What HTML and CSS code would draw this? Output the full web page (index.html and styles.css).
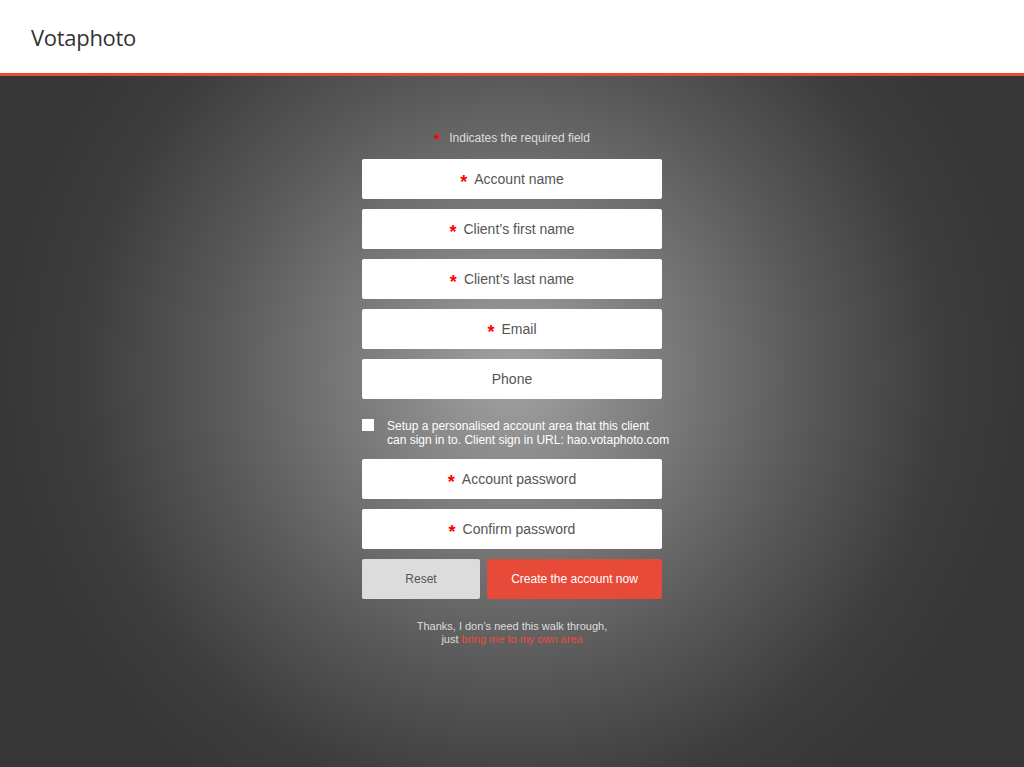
FILE: index.html
```html
<!DOCTYPE html>
<html lang="en">
<head>
  <meta charset="UTF-8">
  <title>Votaphoto</title>
  <meta name="viewport" content="width=device-width, initial-scale=1.0">
  <link rel="stylesheet" href="styles.css">
</head>
<body>

<header class="topbar">
  <div class="logo">Votaphoto</div>
</header>

<main class="stage">
  <form class="signup">
    <p class="legend"><span class="req">*</span> Indicates the required field</p>

    <div class="field"><span class="req">*</span> Account name</div>
    <div class="field"><span class="req">*</span> Client’s first name</div>
    <div class="field"><span class="req">*</span> Client’s last name</div>
    <div class="field"><span class="req">*</span> Email</div>
    <div class="field">Phone</div>

    <label class="check">
      <span class="box"></span>
      <span class="check-text">Setup a personalised account area that this client<br>can sign in to. Client sign in URL: hao.votaphoto.com</span>
    </label>

    <div class="field"><span class="req">*</span> Account password</div>
    <div class="field"><span class="req">*</span> Confirm password</div>

    <div class="actions">
      <button type="button" class="btn reset">Reset</button>
      <button type="button" class="btn create">Create the account now</button>
    </div>

    <p class="skip">Thanks, I don’s need this walk through,<br>just <a href="#">bring me to my own area</a></p>
  </form>
</main>

</body>
</html>
```

FILE: styles.css
```css
* {margin:0;padding:0;box-sizing:border-box}
html, body {height:100%;}
body {
  font-family: 'Liberation Sans', Arial, sans-serif;
  display: flex;
  flex-direction: column;
  background: #363636;
}
.topbar {
  height: 76px;
  background: #fff;
  border-bottom: 3px solid #e84a3a;
  display: flex;
  align-items: center;
  padding: 1px 31px 0;
}
.logo {
  font-family: 'Open Sans', 'Noto Sans', sans-serif;
  font-size: 22px;
  color: #333;
  letter-spacing: -0.3px;
}
.stage {
  flex: 1;
  background: radial-gradient(circle at 50% 43%, #a2a2a2 0, #7c7c7c 150px, #585858 300px, #3d3d3d 430px, #363636 520px);
  display: flex;
  justify-content: center;
}
.signup {
  width: 300px;
  padding-top: 53px;
  display: flex;
  flex-direction: column;
  gap: 10px;
}
.legend {
  font-size: 12px;
  color: #ddd;
  text-align: center;
  height: 20px;
  line-height: 15px;
}
.req {
  color: #f00;
  font-size: 18px;
  font-weight: bold;
  position: relative;
  top: 3px;
  margin-right: 4px;
}
.legend .req {font-size:15px;top:2px;margin-right:6px;}
.field {
  height: 40px;
  background: #fff;
  border-radius: 2px;
  color: #555;
  font-size: 14px;
  display: flex;
  align-items: center;
  justify-content: center;
  gap: 3px;
}
.check {
  display: flex;
  gap: 13px;
  padding: 10px 0 2px;
  color: #fff;
  font-size: 12px;
  line-height: 14px;
  white-space: nowrap;
}
.box {
  flex: none;
  width: 12px;
  height: 12px;
  background: #fff;
}
.actions {
  display: flex;
  gap: 7px;
}
.btn {
  height: 40px;
  border: none;
  border-radius: 2px;
  font-family: inherit;
  font-size: 12px;
}
.reset {width:118px;background:#dcdcdc;color:#555;}
.create {flex:1;background:#e84a3a;color:#fff;}
.skip {
  margin-top: 11px;
  text-align: center;
  font-size: 11px;
  line-height: 13px;
  color: #ddd;
}
.skip a {color:#f04a3a;text-decoration:none;}
```
